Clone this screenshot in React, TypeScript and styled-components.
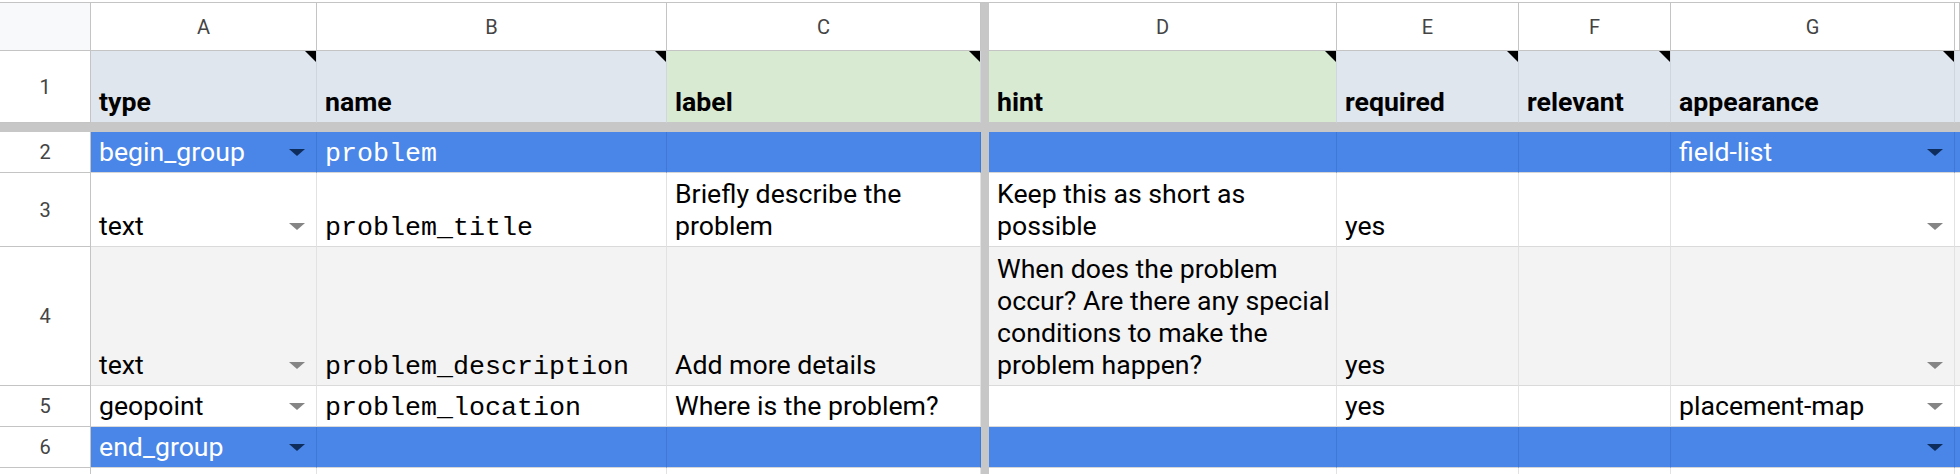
import React from 'react';
import styled, { createGlobalStyle } from 'styled-components';

const GlobalStyle = createGlobalStyle`
  html, body { margin: 0; padding: 0; background: #ffffff; }
  body { font-family: Roboto, "Liberation Sans", Arial, sans-serif; -webkit-font-smoothing: antialiased; }
`;

const COLS = '91px 226px 350px 314px 8px 348px 182px 152px 284px 1fr';

const Sheet = styled.div`
  width: 1960px;
  height: 474px;
  overflow: hidden;
  padding-top: 2px;
  box-sizing: border-box;
  background: #ffffff;
  display: flex;
  flex-direction: column;
`;

const Row = styled.div<{ $h: number; $top?: boolean }>`
  display: grid;
  grid-template-columns: ${COLS};
  height: ${(p) => p.$h}px;
  flex: none;
  box-sizing: border-box;
  border-top: ${(p) => (p.$top ? '1px solid #c4c4c4' : 'none')};
`;

const FreezeBar = styled.div`
  height: 9px;
  flex: none;
  background: #c7c7c7;
`;

const LetterCell = styled.div<{ $corner?: boolean }>`
  display: flex;
  align-items: center;
  justify-content: center;
  box-sizing: border-box;
  background: ${(p) => (p.$corner ? '#f8f9fa' : '#ffffff')};
  border-right: 1px solid #c4c4c4;
  border-bottom: 1px solid #c4c4c4;
  font-size: 20px;
  color: #444444;
`;

const RowNum = styled.div`
  display: flex;
  align-items: center;
  justify-content: center;
  box-sizing: border-box;
  background: #ffffff;
  border-right: 1px solid #c4c4c4;
  border-bottom: 1px solid #c4c4c4;
  font-size: 20px;
  color: #444444;
`;

const FreezeCol = styled.div`
  background: #c7c7c7;
`;

const Cell = styled.div<{ $bg: string; $fg: string; $line: string; $bottom: string; $mono?: boolean; $bold?: boolean }>`
  position: relative;
  box-sizing: border-box;
  min-width: 0;
  display: flex;
  align-items: flex-end;
  justify-content: space-between;
  padding: 0 6px ${(p) => (p.$mono ? '2px' : '4px')} 8px;
  background: ${(p) => p.$bg};
  color: ${(p) => p.$fg};
  border-right: 1px solid ${(p) => p.$line};
  border-bottom: 1px solid ${(p) => p.$bottom};
  font-family: ${(p) => (p.$mono ? '"Liberation Mono", "Courier New", monospace' : 'Roboto, "Liberation Sans", Arial, sans-serif')};
  font-weight: ${(p) => (p.$bold ? 700 : 400)};
  font-size: 26.67px;
  line-height: 32px;
  overflow: hidden;
`;

const CellText = styled.span`
  min-width: 0;
  white-space: pre-line;
`;

const Caret = styled.span<{ $color: string }>`
  flex: none;
  width: 0;
  height: 0;
  border-left: 8px solid transparent;
  border-right: 8px solid transparent;
  border-top: 7px solid ${(p) => p.$color};
  margin: 0 5px 12px 8px;
`;

const NoteMark = styled.span`
  position: absolute;
  top: 0;
  right: 0;
  width: 0;
  height: 0;
  border-top: 11px solid #000000;
  border-left: 11px solid transparent;
`;

type CellDef = { text?: string; mono?: boolean; caret?: boolean };
type RowDef = {
  n: number;
  h: number;
  bg: string;
  fg: string;
  line: string;
  bottom: string;
  caret: string;
  cells: CellDef[];
};

const BLUE = '#4a86e8';
const HEAD = '#dfe6ee';
const GREEN = '#d9ead3';

const letters = ['A', 'B', 'C', 'D', 'E', 'F', 'G', ''];

const headers: { text: string; bg: string; note: boolean }[] = [
  { text: 'type', bg: HEAD, note: true },
  { text: 'name', bg: HEAD, note: true },
  { text: 'label', bg: GREEN, note: true },
  { text: 'hint', bg: GREEN, note: true },
  { text: 'required', bg: HEAD, note: true },
  { text: 'relevant', bg: HEAD, note: true },
  { text: 'appearance', bg: HEAD, note: true },
  { text: '', bg: HEAD, note: false },
];

const blueRow = { bg: BLUE, fg: '#ffffff', line: '#3f79d8', bottom: '#d6d6d6', caret: '#0f2d5c' };
const whiteRow = { bg: '#ffffff', fg: '#000000', line: '#e2e2e2', bottom: '#dadada', caret: '#858585' };
const grayRow = { bg: '#f3f3f3', fg: '#000000', line: '#e2e2e2', bottom: '#dadada', caret: '#858585' };

const rows: RowDef[] = [
  {
    n: 2,
    h: 41,
    ...blueRow,
    cells: [
      { text: 'begin_group', caret: true },
      { text: 'problem', mono: true },
      {},
      {},
      {},
      {},
      { text: 'field-list', caret: true },
      {},
    ],
  },
  {
    n: 3,
    h: 74,
    ...whiteRow,
    cells: [
      { text: 'text', caret: true },
      { text: 'problem_title', mono: true },
      { text: 'Briefly describe the problem' },
      { text: 'Keep this as short as possible' },
      { text: 'yes' },
      {},
      { text: '', caret: true },
      {},
    ],
  },
  {
    n: 4,
    h: 139,
    ...grayRow,
    cells: [
      { text: 'text', caret: true },
      { text: 'problem_description', mono: true },
      { text: 'Add more details' },
      { text: 'When does the problem occur? Are there any special conditions to make the problem happen?' },
      { text: 'yes' },
      {},
      { text: '', caret: true },
      {},
    ],
  },
  {
    n: 5,
    h: 41,
    ...whiteRow,
    cells: [
      { text: 'geopoint', caret: true },
      { text: 'problem_location', mono: true },
      { text: 'Where is the problem?' },
      {},
      { text: 'yes' },
      {},
      { text: 'placement-map', caret: true },
      {},
    ],
  },
  {
    n: 6,
    h: 41,
    ...blueRow,
    cells: [
      { text: 'end_group', caret: true },
      {},
      {},
      {},
      {},
      {},
      { text: '', caret: true },
      {},
    ],
  },
  {
    n: 7,
    h: 20,
    ...whiteRow,
    cells: [{}, {}, {}, {}, {}, {}, {}, {}],
  },
];

function withFreeze<T>(items: T[], render: (item: T, i: number) => React.ReactNode, freezeKey: string) {
  const out: React.ReactNode[] = [];
  items.forEach((item, i) => {
    out.push(render(item, i));
    if (i === 2) out.push(<FreezeCol key={freezeKey} />);
  });
  return out;
}

export default function App() {
  return (
    <>
      <GlobalStyle />
      <Sheet>
        <Row $h={49} $top>
          <LetterCell $corner />
          {withFreeze(letters, (l, i) => <LetterCell key={i}>{l}</LetterCell>, 'fl')}
        </Row>
        <Row $h={72}>
          <RowNum>1</RowNum>
          {withFreeze(
            headers,
            (h, i) => (
              <Cell key={i} $bg={h.bg} $fg="#000000" $line="#d0d6dd" $bottom="#c7c7c7" $bold>
                <CellText>{h.text}</CellText>
                {h.note && <NoteMark />}
              </Cell>
            ),
            'f1'
          )}
        </Row>
        <FreezeBar />
        {rows.map((r) => (
          <Row key={r.n} $h={r.h}>
            <RowNum>{r.n === 7 ? '' : r.n}</RowNum>
            {withFreeze(
              r.cells,
              (c, i) => (
                <Cell key={i} $bg={r.bg} $fg={r.fg} $line={r.line} $bottom={r.bottom} $mono={c.mono}>
                  <CellText>{c.text ?? ''}</CellText>
                  {c.caret && <Caret $color={r.caret} />}
                </Cell>
              ),
              'f' + r.n
            )}
          </Row>
        ))}
      </Sheet>
    </>
  );
}
